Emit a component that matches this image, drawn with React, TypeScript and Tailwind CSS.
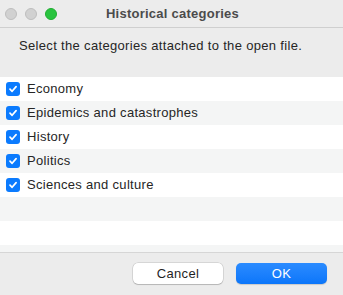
const categories = [
  'Economy',
  'Epidemics and catastrophes',
  'History',
  'Politics',
  'Sciences and culture',
];

function Light({ color, border }: { color: string; border: string }) {
  return <span className={`w-3 h-3 rounded-full border ${color} ${border}`} />;
}

function Checkbox() {
  return (
    <span className="w-[14px] h-[14px] rounded-[3px] bg-[#0b7bfe] flex items-center justify-center shrink-0">
      <svg width="10" height="10" viewBox="0 0 10 10" fill="none">
        <path d="M2 5.2 L4.1 7.3 L8.1 2.6" stroke="white" strokeWidth="1.7" strokeLinecap="round" strokeLinejoin="round" />
      </svg>
    </span>
  );
}

export default function App() {
  const rows = [...categories, '', '', ''];
  return (
    <div
      className="w-[343px] h-[295px] bg-[#ececec] flex flex-col overflow-hidden text-[13px] tracking-[0.3px] text-[#262626]"
      style={{ fontFamily: '"Liberation Sans", Arial, sans-serif' }}
    >
      {/* Title bar */}
      <div className="h-[28px] shrink-0 relative flex items-center border-b border-[#cfcfcf] bg-[#ececec]">
        <div className="flex items-center gap-2 pl-[5px]">
          <Light color="bg-[#d1d1d1]" border="border-[#bebebe]" />
          <Light color="bg-[#d1d1d1]" border="border-[#bebebe]" />
          <Light color="bg-[#29c33f]" border="border-[#1fae31]" />
        </div>
        <div className="absolute inset-0 flex items-center justify-center font-bold text-[#4b4b4b] pl-[2px] tracking-[0.25px]">
          Historical categories
        </div>
      </div>

      {/* Description */}
      <div className="h-[49px] shrink-0 pt-[10px] pl-[19px] leading-[16px] tracking-[0.33px]">
        Select the categories attached to the open file.
      </div>

      {/* List */}
      <div className="h-[175px] shrink-0 overflow-hidden flex flex-col">
        {rows.map((label, i) => (
          <div
            key={i}
            className={`h-[24px] shrink-0 flex items-center gap-[7px] pl-[6px] ${i % 2 === 0 ? 'bg-white' : 'bg-[#f4f5f5]'}`}
          >
            {label && (
              <>
                <Checkbox />
                <span>{label}</span>
              </>
            )}
          </div>
        ))}
      </div>

      {/* Buttons */}
      <div className="flex-1 border-t border-[#d6d6d6] flex justify-end gap-[13px] pt-[10px] pr-[16px]">
        <button className="w-[90px] h-[21px] rounded-[5px] bg-white text-[#1f1f1f] shadow-[0_0_0_0.5px_rgba(0,0,0,0.18),0_1px_1px_rgba(0,0,0,0.15)] leading-[21px]">
          Cancel
        </button>
        <button className="w-[91px] h-[21px] rounded-[5px] bg-[#0c7bff] bg-gradient-to-b from-[#2a8bff] to-[#0a76fa] text-white shadow-[0_1px_1px_rgba(0,0,0,0.15)] leading-[21px]">
          OK
        </button>
      </div>
    </div>
  );
}
